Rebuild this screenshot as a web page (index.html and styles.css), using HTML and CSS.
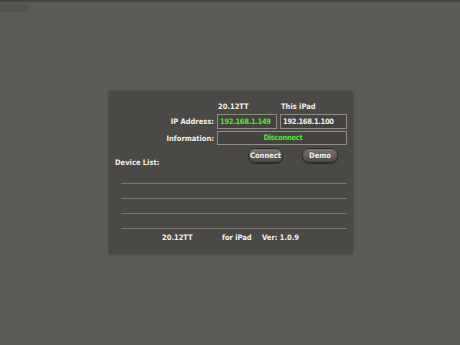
FILE: index.html
```html
<!DOCTYPE html>
<html lang="en">
<head>
  <meta charset="UTF-8">
  <title>20.12TT</title>
  <link rel="stylesheet" href="styles.css">
</head>
<body>
  <div class="topbar"><span class="status"></span></div>

  <main class="stage">
    <div class="panel">
      <div class="row heads">
        <span class="label"></span>
        <span class="head left">20.12TT</span>
        <span class="head right">This iPad</span>
      </div>
      <div class="row">
        <span class="label">IP Address:</span>
        <span class="field green ip-a">192.168.1.149</span>
        <span class="field ip-b">192.168.1.100</span>
      </div>
      <div class="row">
        <span class="label">Information:</span>
        <span class="field green wide">Disconnect</span>
      </div>

      <div class="row actions">
        <span class="list-title">Device List:</span>
        <button class="btn connect">Connect</button>
        <button class="btn demo">Demo</button>
      </div>

      <ul class="devices">
        <li></li>
        <li></li>
        <li></li>
        <li></li>
      </ul>

      <div class="footer">
        <span class="f-name">20.12TT</span>
        <span class="f-for">for iPad</span>
        <span>Ver: 1.0.9</span>
      </div>
    </div>
  </main>
</body>
</html>
```

FILE: styles.css
```css
* {
  margin: 0;
  padding: 0;
  box-sizing: border-box;
}

:root {
  --bg: #5c5a56;
  --panel: #4b4946;
  --field: #45433f;
  --line: #7a7670;
  --text: #f2f0ea;
  --green: #4ee62e;
}

body {
  width: 460px;
  height: 345px;
  background-color: var(--bg);
  font-family: 'DejaVu Sans Condensed', 'DejaVu Sans', 'Liberation Sans', sans-serif;
  font-stretch: condensed;
  font-weight: bold;
  color: var(--text);
  overflow: hidden;
}

.topbar {
  height: 14px;
  border-top: 2px solid #45433f;
  padding-top: 3px;
}

.status {
  display: block;
  width: 28px;
  height: 7px;
  background-color: #55534f;
}

.stage {
  padding: 77px 0 0 109px;
}

.panel {
  width: 244px;
  height: 163px;
  background-color: var(--panel);
  box-shadow: 0 0 2px rgba(0, 0, 0, 0.35);
  padding-top: 9px;
  font-size: 7.5px;
}

.row {
  display: flex;
  align-items: center;
  margin-bottom: 2px;
}

.label {
  width: 108px;
  text-align: right;
  padding-right: 3px;
}

.heads {
  height: 12px;
  margin-bottom: 2px;
}

.head.left {
  width: 63px;
  padding-left: 1px;
}

.head.right {
  padding-left: 1px;
}

.field {
  height: 15px;
  line-height: 13px;
  background-color: var(--field);
  border: 1px solid #908c85;
  padding-left: 2px;
  letter-spacing: -0.3px;
}

.green {
  color: var(--green);
}

.ip-a {
  width: 60px;
  margin-right: 3px;
}

.ip-b {
  width: 67px;
}

.wide {
  width: 130px;
  height: 14px;
  line-height: 12px;
  text-align: center;
}

.actions {
  height: 17px;
  margin-top: 3px;
  align-items: flex-start;
}

.list-title {
  width: 139px;
  padding-left: 6px;
  padding-top: 10px;
}

.btn {
  height: 15px;
  border: 1px solid #2e2d2b;
  border-radius: 7px;
  background: linear-gradient(#7a7772, #4a4844);
  color: var(--text);
  font-family: inherit;
  font-stretch: condensed;
  font-weight: bold;
  font-size: 7.5px;
  box-shadow: 0 1px 1px rgba(0, 0, 0, 0.4);
}

.connect {
  width: 35px;
  margin-right: 19px;
}

.demo {
  width: 36px;
}

.devices {
  list-style: none;
  margin: 12px 6px 0 12px;
}

.devices li {
  height: 15px;
  border-bottom: 1px solid var(--line);
}

.devices li:first-child {
  height: 7px;
}

.footer {
  display: flex;
  margin-top: 4px;
  padding-left: 53px;
}

.f-name {
  width: 60px;
}

.f-for {
  width: 40px;
}
```
